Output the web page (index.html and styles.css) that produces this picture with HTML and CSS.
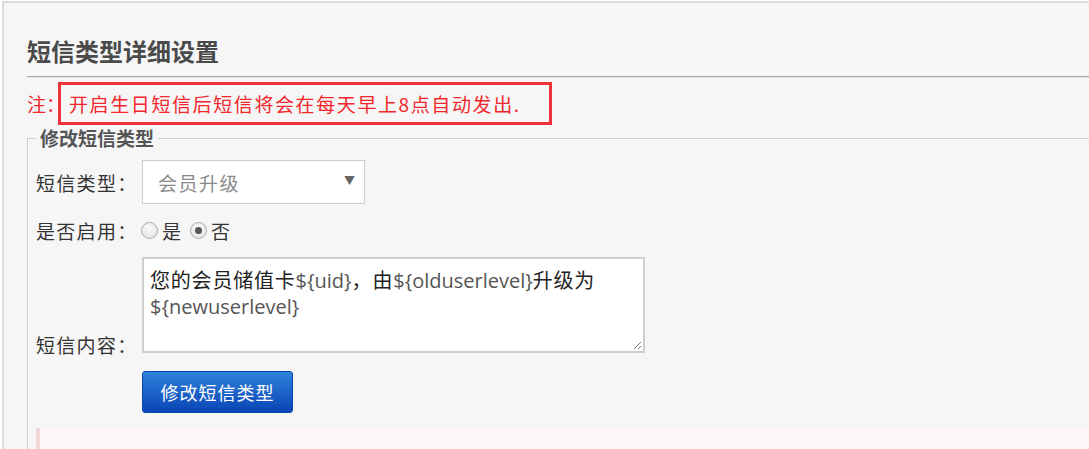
FILE: index.html
```html
<!DOCTYPE html>
<html lang="zh-CN">
<head>
<meta charset="utf-8">
<title>短信类型详细设置</title>
<link rel="stylesheet" href="styles.css">
</head>
<body>
<div class="page">
  <h2 class="title">短信类型详细设置</h2>
  <div class="rule"></div>
  <div class="note">
    <span class="note-label">注：</span>
    <span class="note-box">开启生日短信后短信将会在每天早上8点自动发出.</span>
  </div>
  <fieldset class="group">
    <legend class="legend">修改短信类型</legend>
    <div class="row row-select">
      <span class="label">短信类型：</span>
      <div class="select">
        <span class="select-text">会员升级</span>
        <span class="select-arrow">▼</span>
      </div>
    </div>
    <div class="row row-radio">
      <span class="label">是否启用：</span>
      <label class="radio"><span class="dot"></span>是</label>
      <label class="radio"><span class="dot checked"></span>否</label>
    </div>
    <div class="row row-text">
      <span class="label">短信内容：</span>
      <div class="textarea">您的会员储值卡<span class="lat">${uid}</span>，由<span class="lat">${olduserlevel}</span>升级为<br><span class="lat">${newuserlevel}</span><svg class="grip" width="10" height="10" viewBox="0 0 10 10"><path d="M9 2 L2 9 M9 6 L6 9" stroke="#777" stroke-width="1" fill="none"/></svg></div>
    </div>
    <div class="row row-btn">
      <button class="btn">修改短信类型</button>
    </div>
    <div class="alert"></div>
  </fieldset>
</div>
</body>
</html>
```

FILE: styles.css
```css
html, body {
  margin: 0;
  padding: 0;
  background: #ffffff;
  overflow: hidden;
  height: 449px;
}
body {
  font-family: "Noto Sans CJK SC", "Liberation Sans", sans-serif;
  color: #333;
}
.page {
  margin: 1px 0 0 2px;
  width: 1200px;
  height: 460px;
  border-top: 2px solid #dcdcdc;
  border-left: 2px solid #dcdcdc;
  background: #f6f6f6;
  padding: 0 0 0 23px;
  box-sizing: border-box;
}
.title {
  margin: 0;
  padding-top: 32px;
  font-size: 24px;
  line-height: 32px;
  font-weight: 700;
  color: #4a4a4a;
}
.rule {
  margin-top: 9px;
  border-top: 1px solid #a8a8a8;
  border-bottom: 1px solid #e4e4e4;
}
.note {
  display: flex;
  align-items: center;
  margin-top: 4px;
  color: #f2262b;
  font-size: 19px;
  line-height: 25px;
}
.note-label {
  width: 31px;
}
.note-box {
  border: 3px solid #f0323a;
  padding: 6px 28px 6px 8px;
  letter-spacing: 1.6px;
}
.group {
  margin: 1px 0 0 0;
  padding: 0 0 0 8px;
  border: 1px solid #cfcfcf;
  border-right: none;
  border-bottom: none;
  height: 330px;
}
.legend {
  padding: 0 4px;
  margin: 0;
  font-size: 19px;
  line-height: 24px;
  font-weight: 700;
  color: #555;
}
.row {
  display: flex;
  align-items: center;
}
.label {
  width: 106px;
  flex: none;
  font-size: 19px;
  color: #333;
  letter-spacing: 1.3px;
}
.row-select {
  margin-top: 10px;
}
.select {
  width: 223px;
  height: 44px;
  box-sizing: border-box;
  border: 1px solid #cccccc;
  background: #ffffff;
  display: flex;
  align-items: center;
  justify-content: space-between;
  padding: 0 9px 0 15px;
}
.select-text {
  font-size: 19px;
  color: #8a8a8a;
  letter-spacing: 1.5px;
}
.select-arrow {
  font-size: 11px;
  color: #666;
  margin-top: -4px;
}
.row-radio {
  margin-top: 13px;
  height: 26px;
}
.radio {
  display: flex;
  align-items: center;
  font-size: 19px;
  color: #333;
  margin-right: 10px;
}
.dot {
  width: 15px;
  height: 15px;
  border: 1px solid #a9a9a9;
  border-radius: 50%;
  background: radial-gradient(circle at 50% 35%, #fbfbfb 0%, #dedede 100%);
  margin: 0 4px 0 -1px;
  position: relative;
}
.dot.checked::after {
  content: "";
  position: absolute;
  left: 4px;
  top: 4px;
  width: 7px;
  height: 7px;
  border-radius: 50%;
  background: #555;
}
.row-text {
  margin-top: 14px;
  align-items: flex-end;
}
.row-text .label {
  margin-bottom: -4px;
  line-height: 24px;
}
.textarea {
  width: 503px;
  height: 96px;
  box-sizing: border-box;
  border: 2px solid #cfcfcf;
  background: #ffffff;
  padding: 8px 6px;
  font-size: 20px;
  line-height: 25px;
  color: #222;
  position: relative;
  letter-spacing: 0.8px;
}
.lat {
  font-family: "Open Sans", "Liberation Sans", sans-serif;
  font-size: 20px;
  color: #555;
  letter-spacing: 0;
}
.grip {
  position: absolute;
  right: 1px;
  bottom: 1px;
}
.row-btn {
  margin-top: 18px;
  padding-left: 106px;
}
.btn {
  width: 151px;
  height: 42px;
  border: 1px solid #0b47a8;
  border-radius: 3px;
  background: linear-gradient(#2f82da, #0a45b6);
  color: #ffffff;
  font-family: "Noto Sans CJK SC", sans-serif;
  font-size: 18px;
  letter-spacing: 1px;
  padding: 0;
}
.alert {
  margin-top: 15px;
  height: 40px;
  border-left: 4px solid #f2d7da;
  background: #fcf6f6;
}
```
